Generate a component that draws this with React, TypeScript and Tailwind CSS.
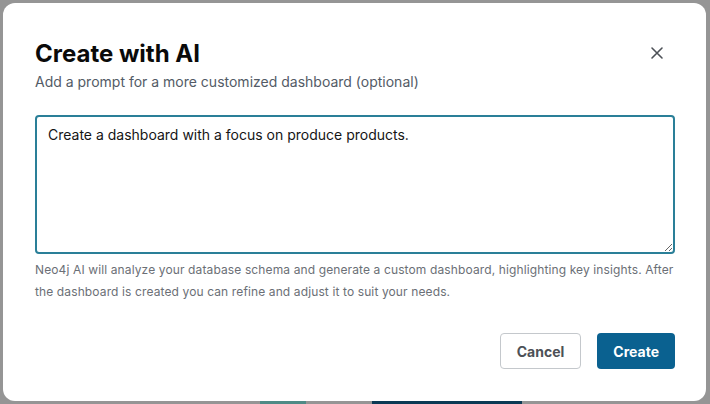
import React from "react";

export default function App() {
  return (
    <div className="relative w-[710px] h-[404px] bg-[#959595] overflow-hidden" style={{ fontFamily: "Inter, 'Noto Sans', sans-serif" }}>
      <div className="absolute left-[260px] top-[401px] w-[46px] h-[3px] bg-[#4f8a86]" />
      <div className="absolute left-[372px] top-[401px] w-[150px] h-[3px] bg-[#0b3a55]" />
      <div className="absolute left-[3px] top-[3px] w-[703px] h-[398px] bg-white rounded-[12px] flex flex-col pl-[32px] pr-[31px] pt-[35px] pb-[32px]">
        <div className="flex items-start justify-between">
          <div className="flex flex-col">
            <h1 className="text-[24px] leading-[32px] font-bold text-[#0a0a0a]">Create with AI</h1>
            <p className="text-[14px] leading-[20px] text-[#535b66] mt-[2px]">Add a prompt for a more customized dashboard (optional)</p>
          </div>
          <button className="mt-[5px] mr-[8px] w-[20px] h-[20px] flex items-center justify-center text-[#4d5157]">
            <svg width="14" height="14" viewBox="0 0 14 14" fill="none" stroke="currentColor" strokeWidth="1.6" strokeLinecap="round">
              <path d="M2 2L12 12M12 2L2 12" />
            </svg>
          </button>
        </div>
        <textarea
          className="mt-[23px] w-[640px] h-[139px] border-2 border-[#2a7f98] rounded-[4px] px-[11px] py-[8px] text-[14px] leading-[20px] text-[#151515] outline-none resize-y"
          defaultValue="Create a dashboard with a focus on produce products."
        />
        <p className="mt-[5px] text-[12px] leading-[22px] tracking-[0.12px] text-[#6b6f76] w-[640px]">
          Neo4j AI will analyze your database schema and generate a custom dashboard, highlighting key insights. After the dashboard is created you can refine and adjust it to suit your needs.
        </p>
        <div className="mt-auto flex justify-end gap-[16px] w-[640px]">
          <button className="h-[36px] px-[16px] border border-[#c4c8cc] rounded-[4px] text-[14px] font-bold text-[#4d5157] bg-white">Cancel</button>
          <button className="h-[36px] px-[16px] rounded-[4px] text-[14px] font-bold text-white bg-[#0a6190]">Create</button>
        </div>
      </div>
    </div>
  );
}
